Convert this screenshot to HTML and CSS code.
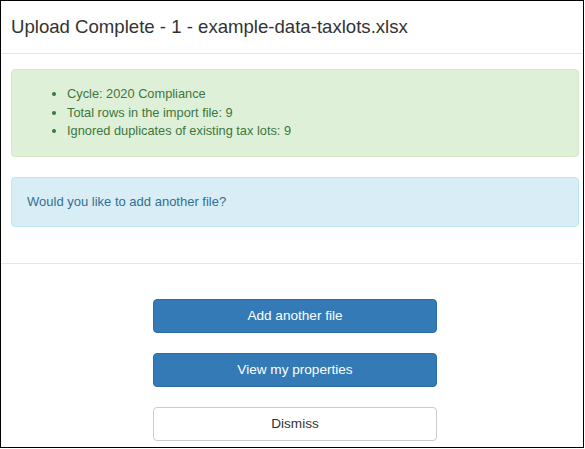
FILE: index.html
```html
<!DOCTYPE html>
<html>
<head>
<meta charset="utf-8">
<link rel="stylesheet" href="styles.css">
</head>
<body>
<div class="modal">
  <div class="modal-header">
    <h4 class="modal-title">Upload Complete - 1 - example-data-taxlots.xlsx</h4>
  </div>
  <div class="modal-body">
    <div class="alert alert-success">
      <ul class="summary">
        <li>Cycle: 2020 Compliance</li>
        <li>Total rows in the import file: 9</li>
        <li>Ignored duplicates of existing tax lots: 9</li>
      </ul>
    </div>
    <div class="alert alert-info">Would you like to add another file?</div>
  </div>
  <div class="modal-footer">
    <button class="btn btn-primary">Add another file</button>
    <button class="btn btn-primary">View my properties</button>
    <button class="btn btn-default">Dismiss</button>
  </div>
</div>
</body>
</html>
```
FILE: styles.css
```css
html, body {
  margin: 0;
  padding: 0;
  background: #fff;
}
body {
  font-family: "Liberation Sans", Arial, sans-serif;
  font-size: 13px;
  line-height: 1.42857;
  color: #333;
}
.modal {
  width: 584px;
  height: 448px;
  box-sizing: border-box;
  border: 1px solid #000;
  overflow: hidden;
  background: #fff;
}
.modal-header {
  padding: 13px 10px;
  border-bottom: 1px solid #e5e5e5;
}
.modal-title {
  margin: 0;
  font-size: 18.6px;
  line-height: 26px;
  font-weight: normal;
  color: #333;
}
.modal-body {
  padding: 15px 4px 16px 10px;
}
.alert {
  padding: 15px;
  border: 1px solid transparent;
  border-radius: 4px;
  margin-bottom: 20px;
}
.alert-success {
  background: #dff0d8;
  border-color: #d6e9c6;
  color: #3c763d;
}
.alert-info {
  background: #d9edf7;
  border-color: #bce8f1;
  color: #31708f;
}
.summary {
  margin: 0;
  padding-left: 40px;
  font-size: 12.8px;
  line-height: 18.57px;
}
.modal-footer {
  border-top: 1px solid #e5e5e5;
  padding: 35px 4px 0 10px;
  display: flex;
  flex-direction: column;
  align-items: center;
  gap: 20px;
}
.btn {
  width: 284px;
  height: 34px;
  box-sizing: border-box;
  font-family: "Liberation Sans", Arial, sans-serif;
  font-size: 13.6px;
  line-height: 20px;
  padding: 6px 12px;
  border: 1px solid transparent;
  border-radius: 4px;
  margin: 0;
  text-align: center;
}
.btn-primary {
  background: #337ab7;
  border-color: #2e6da4;
  color: #fff;
}
.btn-default {
  background: #fff;
  border-color: #ccc;
  color: #333;
}
```
